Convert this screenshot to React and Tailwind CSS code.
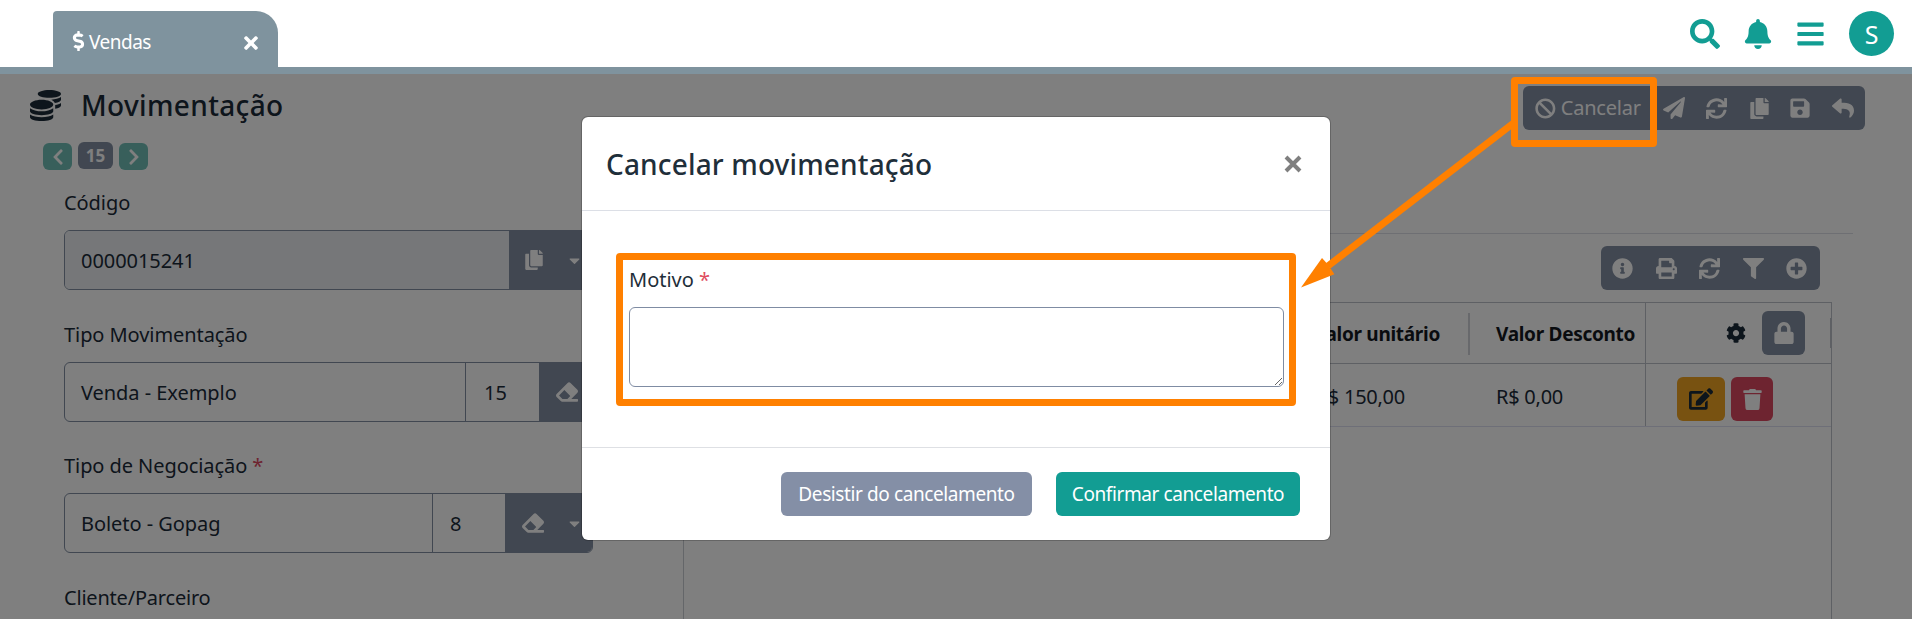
import React from 'react';
import {
  FaCoins, FaSync, FaCopy, FaSave, FaReply, FaPaperPlane, FaBan, FaInfoCircle, FaPrint, FaFilter,
  FaPlusCircle, FaCog, FaLock, FaEdit, FaTrash, FaEraser, FaSearch, FaBell, FaBars, FaDollarSign,
  FaTimes, FaChevronLeft, FaChevronRight, FaCaretDown,
} from 'react-icons/fa';

function Header() {
  return (
    <header className="flex h-[74px] shrink-0 items-end justify-between border-b-[7px] border-[#7f939e] bg-white">
      <div className="ml-[53px] flex h-14 w-[225px] items-center rounded-tl-[4px] rounded-tr-[22px] bg-[#7f939e] pl-[18px] pr-[17px] text-white">
        <FaDollarSign className="mt-[3px] h-5 w-[15px]" />
        <span className="ml-[3px] mt-[5px] flex-1 text-[19px] leading-6 tracking-[-0.5px]">Vendas</span>
        <FaTimes className="mt-[8px] size-[20px]" />
      </div>
      <div className="mr-[18px] flex h-full items-center text-[#129d93]">
        <FaSearch className="size-[30px]" />
        <FaBell className="ml-[23px] h-[30px] w-[30px]" />
        <FaBars className="ml-[24px] h-[30px] w-[27px]" />
        <div className="ml-[25px] flex size-[45px] items-center justify-center rounded-full bg-[#129d93] pt-[2px] text-[25px] leading-none text-white">
          S
        </div>
      </div>
    </header>
  );
}

function Pager() {
  return (
    <div className="ml-[43px] mt-[14px] flex h-7 items-center gap-[6px] text-white">
      <button className="mt-px flex h-[27px] w-[29px] items-center justify-center rounded-[6px] bg-[#70bfb7]">
        <FaChevronLeft className="size-[18px]" />
      </button>
      <span className="mb-px flex h-[27px] w-[35px] items-center justify-center rounded-[6px] bg-[#828ea2] text-[17px] font-bold leading-none">
        15
      </span>
      <button className="mt-px flex h-[27px] w-[29px] items-center justify-center rounded-[6px] bg-[#70bfb7]">
        <FaChevronRight className="size-[18px]" />
      </button>
    </div>
  );
}

function Field({ label, required, children }) {
  return (
    <div className="h-[131.5px]">
      <div className="mb-[12px] h-[30px] whitespace-nowrap text-[20px] leading-[30px] tracking-[-0.07px]">
        {label}
        {required && <span className="text-[#dc4860]"> *</span>}
      </div>
      <div className="flex h-[60px] w-[529px] overflow-hidden rounded-[6px] border border-[#828ea2] text-[20px] tracking-[-0.05px]">
        {children}
      </div>
    </div>
  );
}

function ToolIcon({ icon: Icon, className }) {
  return (
    <span className="flex w-[43px] justify-center">
      <Icon className={className} />
    </span>
  );
}

function LeftPanel() {
  return (
    <section className="w-[683px] shrink-0">
      <h1 className="flex h-[60px] items-center pl-[30px] text-[28px] font-medium">
        <FaCoins className="mt-[2px] size-[31px]" />
        <span className="ml-[20px] mt-px tracking-[0.35px]">Movimentação</span>
      </h1>
      <div className="-mt-[6px]"><Pager /></div>
      <div className="ml-[64px] mt-[18px]">
        <Field label="Código">
          <div className="flex flex-1 items-center bg-[#eceff3] pl-[16px] pt-[2px]">0000015241</div>
          <div className="flex w-[83px] items-center bg-[#828ea2] text-white">
            <FaCopy className="ml-[15px] size-[20px]" />
            <FaCaretDown className="ml-[22px] size-[17px]" />
          </div>
        </Field>
        <Field label="Tipo Movimentação">
          <div className="flex flex-1 items-center pl-[16px] pt-[2px]">Venda - Exemplo</div>
          <div className="flex w-[74px] items-center border-l border-[#828ea2] pl-[18px] pt-[2px]">15</div>
          <div className="flex w-[53px] items-center bg-[#828ea2] text-white">
            <FaEraser className="ml-[17px] size-[22px]" />
          </div>
        </Field>
        <Field label="Tipo de Negociação" required>
          <div className="flex flex-1 items-center pl-[16px] pt-[2px]">Boleto - Gopag</div>
          <div className="flex w-[73px] items-center border-l border-[#828ea2] pl-[17px] pt-[2px]">8</div>
          <div className="flex w-[87px] items-center bg-[#828ea2] text-white">
            <FaEraser className="ml-[17px] size-[22px]" />
            <FaCaretDown className="ml-[22px] size-[17px]" />
          </div>
        </Field>
        <div className="h-[30px] text-[20px] leading-[30px] tracking-[-0.2px]">Cliente/Parceiro</div>
      </div>
    </section>
  );
}

function RightPanel() {
  return (
    <section className="flex flex-1 flex-col">
      <div className="mt-3 flex justify-end pr-[47px]">
        <div className="flex h-11 w-[342px] items-center rounded-[6px] bg-[#828ea2] text-white">
          <FaBan className="ml-3 size-[21px]" />
          <span className="ml-[5px] w-[94px] text-[20px] tracking-[-0.2px]">Cancelar</span>
          <ToolIcon icon={FaPaperPlane} className="size-[22px]" />
          <ToolIcon icon={FaSync} className="size-[21px]" />
          <ToolIcon icon={FaCopy} className="size-[21px]" />
          <ToolIcon icon={FaSave} className="size-[22px] -translate-x-[1px]" />
          <ToolIcon icon={FaReply} className="size-[22px] -translate-x-[1px]" />
        </div>
      </div>
      <div className="mt-[103px] mr-[59px] border-t border-[#dcdfe6]" />
      <div className="flex flex-1 flex-col border-l border-[#c8ccd2]">
        <div className="mt-3 mr-[92px] flex h-11 w-[219px] items-center justify-between self-end rounded-[6px] bg-[#828ea2] pl-[11px] pr-[13px] text-white">
          <FaInfoCircle className="size-[21px]" />
          <FaPrint className="size-[21px]" />
          <FaSync className="size-[21px]" />
          <FaFilter className="size-[21px]" />
          <FaPlusCircle className="size-[21px]" />
        </div>
        <div className="mr-[80px] mt-3 flex-1 border-r border-t border-[#bdc1c9]">
          <div className="flex h-[61px] justify-end border-b border-[#bdc1c9] text-[19px] font-bold tracking-[-0.3px] text-[#14181f]">
            <div className="mr-[28px] flex items-center pt-[3px] whitespace-nowrap">Valor unitário</div>
            <div className="mt-[10px] h-[42px] w-[2px] bg-[#d0d3d9]" />
            <div className="flex w-[175px] items-center whitespace-nowrap pl-[26px] pt-[3px]">Valor Desconto</div>
            <div className="flex w-[186px] items-center border-l border-[#bdc1c9] text-[#1b2a38]">
              <FaCog className="ml-[80px] size-[20px]" />
              <div className="ml-[16px] flex h-11 w-[43px] items-center justify-center rounded-[6px] bg-[#828ea2] text-white">
                <FaLock className="size-[22px]" />
              </div>
              <div className="ml-auto h-[30px] w-px bg-[#bdc1c9]" />
            </div>
          </div>
          <div className="flex h-[63px] justify-end border-b border-[#dcdff0] text-[20px] tracking-[-0.25px]">
            <div className="mr-[91px] flex items-center pt-[3px] whitespace-nowrap">R$ 150,00</div>
            <div className="flex w-[149px] items-center whitespace-nowrap pt-[3px]">R$ 0,00</div>
            <div className="flex w-[186px] items-center border-l border-[#bdc1c9] pl-[31px] pt-2">
              <div className="flex h-11 w-12 items-center justify-center rounded-[6px] bg-[#f0a422]">
                <FaEdit className="size-[24px]" />
              </div>
              <div className="ml-[6px] flex h-11 w-[42px] items-center justify-center rounded-[6px] bg-[#dc4860] text-white">
                <FaTrash className="size-[21px]" />
              </div>
            </div>
          </div>
        </div>
      </div>
    </section>
  );
}

function Modal() {
  return (
    <div className="absolute left-[581px] top-[116px] flex h-[425px] w-[750px] flex-col rounded-[7px] border border-black/20 bg-white bg-clip-padding text-[#1f2f3a]">
      <div className="flex h-[94px] items-center border-b border-[#dcdfe6] pl-[24px] pr-[28px]">
        <h2 className="flex-1 text-[28px] font-medium leading-10 tracking-[0.15px]">Cancelar movimentação</h2>
        <svg viewBox="0 0 18 18" className="size-[18px]">
          <path d="M2 2L16 16M16 2L2 16" stroke="#7f7f7f" strokeWidth="4" />
        </svg>
      </div>
      <div className="flex-1 pl-[47px] pr-[46px] pt-[54px] text-[20px] leading-[30px]">
        <div>Motivo <span className="text-[#e04c60]">*</span></div>
        <textarea className="mt-[12px] block h-[80px] w-full rounded-[6px] border border-[#7f8ca3] bg-white" />
      </div>
      <div className="flex h-[93px] items-center justify-end gap-[24px] border-t border-[#dee0e4] pr-[30px] text-[19px] tracking-[-0.4px] text-white">
        <button className="h-11 w-[251px] whitespace-nowrap rounded-[6px] bg-[#848fa6]">Desistir do cancelamento</button>
        <button className="h-11 w-[244px] whitespace-nowrap rounded-[6px] bg-[#129d93]">Confirmar cancelamento</button>
      </div>
    </div>
  );
}

function Highlights() {
  return (
    <>
      <div className="pointer-events-none absolute left-[616px] top-[253px] h-[153px] w-[680px] rounded-[4px] border-[7px] border-[#ff8000]" />
      <div className="pointer-events-none absolute left-[1511px] top-[77px] h-[70px] w-[146px] rounded-[4px] border-[7px] border-[#ff8000]" />
      <svg className="pointer-events-none absolute left-[1290px] top-[110px]" width="230" height="190" viewBox="1290 110 230 190">
        <path d="M1328 266L1513 123.5" stroke="#ff8000" strokeWidth="7" />
        <path d="M1301 287.4L1322 258L1327 263.5L1331 269L1334.4 274.3Z" fill="#ff8000" />
      </svg>
    </>
  );
}

export default function App() {
  return (
    <div className="relative flex h-[619px] w-[1912px] flex-col overflow-hidden bg-white font-['Noto_Sans',sans-serif] text-[#1b2a38]">
      <Header />
      <main className="relative flex min-h-0 flex-1 overflow-hidden">
        <LeftPanel />
        <RightPanel />
        <div className="absolute inset-0 bg-black/50" />
      </main>
      <Modal />
      <Highlights />
    </div>
  );
}
